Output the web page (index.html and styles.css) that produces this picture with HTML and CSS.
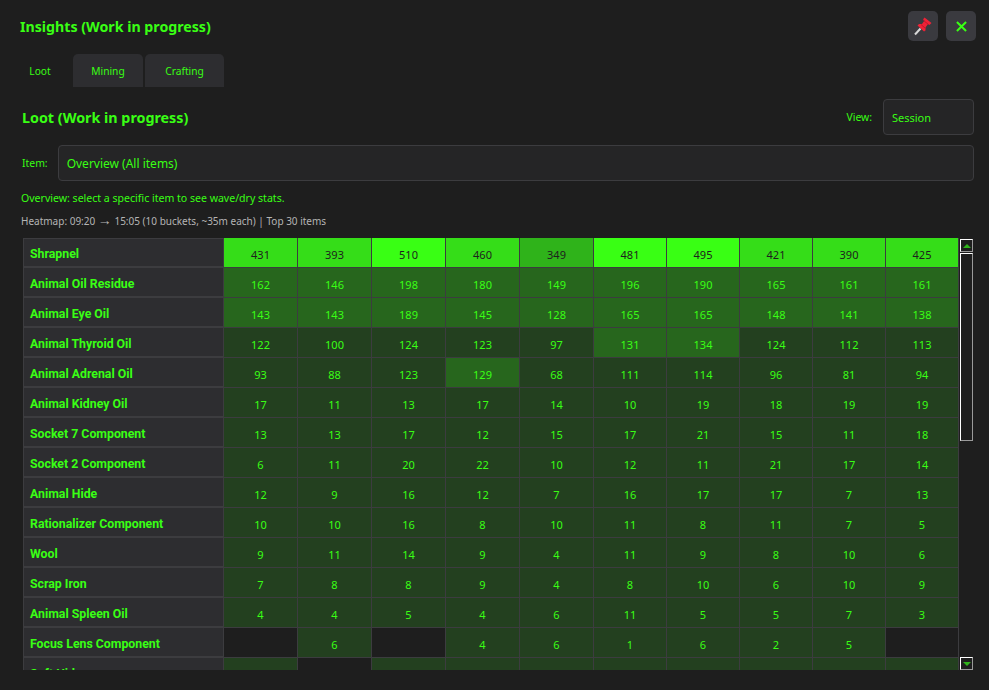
FILE: index.html
```html
<!DOCTYPE html>
<html lang="en">
<head>
    <meta charset="UTF-8">
    <title>Insights (Work in progress)</title>
    <link rel="stylesheet" href="styles.css">
</head>
<body>
    <div class="window">
        <header class="title-bar">
            <h1>Insights (Work in progress)</h1>
            <div class="title-buttons">
                <button class="icon-button" aria-label="Pin">
                    <svg width="20" height="20" viewBox="0 0 20 20">
                        <path d="M2 18.5 L7.5 12.5" stroke="#d8d8d8" stroke-width="2"/>
                        <path d="M11.5 1.5 L18.5 7 L16.5 9 L15 8 L12.5 11.5 L12.5 14.5 L11 15.5 L4.5 9.5 L6 8 L9 8 L11.5 4.5 L10 3.5 Z" fill="#ee2236"/>
                        <path d="M10.5 4.5 L15.5 8.5 M8 8.5 L12.5 12.5" stroke="#c2152c" stroke-width="1"/>
                    </svg>
                </button>
                <button class="icon-button" aria-label="Close">
                    <svg width="11" height="11" viewBox="0 0 12 12">
                        <path d="M1 1 L11 11 M11 1 L1 11" stroke="#39ff14" stroke-width="2.2"/>
                    </svg>
                </button>
            </div>
        </header>

        <nav class="tabs">
            <div class="tab active">Loot</div>
            <div class="tab tab-mining">Mining</div>
            <div class="tab tab-crafting">Crafting</div>
        </nav>

        <div class="section-head">
            <h2>Loot (Work in progress)</h2>
            <div class="view-picker">
                <span>View:</span>
                <div class="field view-field">Session</div>
            </div>
        </div>

        <div class="item-row">
            <span>Item:</span>
            <div class="field item-field">Overview (All items)</div>
        </div>

        <p class="hint">Overview: select a specific item to see wave/dry stats.</p>
        <p class="heatmap-info">Heatmap: 09:20 <span class="arrow">→</span> 15:05 (10 buckets, ~35m each) | Top 30 items</p>

        <div class="heatmap">
            <table>
                <tr><th>Shrapnel</th><td class="hot">431</td><td class="hot">393</td><td class="top">510</td><td class="hot">460</td><td class="warm">349</td><td class="top">481</td><td class="top">495</td><td class="hot">421</td><td class="hot">390</td><td class="hot">425</td></tr>
                <tr><th>Animal Oil Residue</th><td class="mid">162</td><td class="mid">146</td><td class="mid">198</td><td class="mid">180</td><td class="mid">149</td><td class="mid">196</td><td class="mid">190</td><td class="mid">165</td><td class="mid">161</td><td class="mid">161</td></tr>
                <tr><th>Animal Eye Oil</th><td class="mid">143</td><td class="mid">143</td><td class="mid">189</td><td class="mid">145</td><td class="mid">128</td><td class="mid">165</td><td class="mid">165</td><td class="mid">148</td><td class="mid">141</td><td class="mid">138</td></tr>
                <tr><th>Animal Thyroid Oil</th><td>122</td><td>100</td><td>124</td><td>123</td><td>97</td><td class="mid">131</td><td class="mid">134</td><td>124</td><td>112</td><td>113</td></tr>
                <tr><th>Animal Adrenal Oil</th><td>93</td><td>88</td><td>123</td><td class="mid">129</td><td>68</td><td>111</td><td>114</td><td>96</td><td>81</td><td>94</td></tr>
                <tr><th>Animal Kidney Oil</th><td>17</td><td>11</td><td>13</td><td>17</td><td>14</td><td>10</td><td>19</td><td>18</td><td>19</td><td>19</td></tr>
                <tr><th>Socket 7 Component</th><td>13</td><td>13</td><td>17</td><td>12</td><td>15</td><td>17</td><td>21</td><td>15</td><td>11</td><td>18</td></tr>
                <tr><th>Socket 2 Component</th><td>6</td><td>11</td><td>20</td><td>22</td><td>10</td><td>12</td><td>11</td><td>21</td><td>17</td><td>14</td></tr>
                <tr><th>Animal Hide</th><td>12</td><td>9</td><td>16</td><td>12</td><td>7</td><td>16</td><td>17</td><td>17</td><td>7</td><td>13</td></tr>
                <tr><th>Rationalizer Component</th><td>10</td><td>10</td><td>16</td><td>8</td><td>10</td><td>11</td><td>8</td><td>11</td><td>7</td><td>5</td></tr>
                <tr><th>Wool</th><td>9</td><td>11</td><td>14</td><td>9</td><td>4</td><td>11</td><td>9</td><td>8</td><td>10</td><td>6</td></tr>
                <tr><th>Scrap Iron</th><td>7</td><td>8</td><td>8</td><td>9</td><td>4</td><td>8</td><td>10</td><td>6</td><td>10</td><td>9</td></tr>
                <tr><th>Animal Spleen Oil</th><td>4</td><td>4</td><td>5</td><td>4</td><td>6</td><td>11</td><td>5</td><td>5</td><td>7</td><td>3</td></tr>
                <tr><th>Focus Lens Component</th><td class="empty"></td><td>6</td><td class="empty"></td><td>4</td><td>6</td><td>1</td><td>6</td><td>2</td><td>5</td><td class="empty"></td></tr>
                <tr><th>Soft Hide</th><td>2</td><td class="empty"></td><td>2</td><td>3</td><td>1</td><td>3</td><td>3</td><td>1</td><td>5</td><td>3</td></tr>
            </table>
            <div class="scrollbar">
                <div class="scroll-btn"><span class="arrow-up"></span></div>
                <div class="scroll-thumb"></div>
                <div class="scroll-track"></div>
                <div class="scroll-btn"><span class="arrow-down"></span></div>
            </div>
        </div>
    </div>
</body>
</html>
```

FILE: styles.css
```css
html, body {
    margin: 0;
    height: 100%;
    overflow: hidden;
}
body {
    font-family: "Noto Sans", "Open Sans", sans-serif;
    font-size: 11px;
    background-color: #1e1e1e;
    color: #39ff14;
}
.window {
    padding: 11px 15px 0 18px;
    height: 690px;
    box-sizing: border-box;
}
.title-bar {
    display: flex;
    justify-content: space-between;
    align-items: center;
    height: 30px;
    padding-left: 2px;
}
h1 {
    margin: 0;
    font-size: 14.2px;
    font-weight: bold;
}
.title-buttons {
    display: flex;
    gap: 8px;
    margin-right: -2px;
}
.icon-button {
    display: flex;
    justify-content: center;
    align-items: center;
    width: 30px;
    height: 30px;
    padding: 0;
    background-color: #3a3a3f;
    border: none;
    border-radius: 5px;
}
.tabs {
    display: flex;
    height: 33px;
    margin-top: 13px;
    font-size: 10.2px;
}
.tab {
    display: flex;
    justify-content: center;
    align-items: center;
    background-color: #2d2d30;
    border-radius: 5px 5px 0 0;
}
.tab.active {
    box-sizing: border-box;
    width: 55px;
    padding-right: 11px;
    background-color: transparent;
}
.tab-mining {
    width: 70px;
    margin-right: 2px;
}
.tab-crafting {
    width: 79px;
}
.section-head {
    display: flex;
    justify-content: space-between;
    align-items: center;
    height: 36px;
    margin-top: 12px;
    padding-left: 4px;
}
h2 {
    margin: 0;
    font-size: 14.3px;
    font-weight: bold;
}
.view-picker {
    display: flex;
    align-items: center;
    gap: 11px;
    font-size: 10.4px;
}
.field {
    display: flex;
    align-items: center;
    box-sizing: border-box;
    height: 36px;
    padding-left: 8px;
    background-color: #252526;
    border: 1px solid #3c3c3f;
    border-radius: 4px;
}
.view-field {
    width: 91px;
    font-size: 11px;
}
.item-row {
    display: flex;
    align-items: center;
    gap: 10px;
    margin-top: 10px;
    padding-left: 4px;
    font-size: 10.4px;
}
.item-field {
    flex: 1;
    font-size: 12px;
}
.hint, .heatmap-info {
    margin: 0;
    padding-left: 3px;
    line-height: 15px;
}
.hint {
    margin-top: 10px;
    font-size: 10.55px;
}
.heatmap-info {
    margin-top: 8px;
    font-size: 10px;
    color: #b4b4b4;
}
.arrow {
    font-family: "Liberation Sans", sans-serif;
    font-size: 14px;
    line-height: 0;
}
.heatmap {
    display: flex;
    height: 432px;
    margin-top: 9px;
    margin-left: 5px;
    overflow: hidden;
}
table {
    width: 936px;
    height: 450px;
    margin-top: -1px;
    table-layout: fixed;
    border-collapse: collapse;
    flex: none;
}
tr {
    height: 30px;
}
th {
    width: 200px;
    box-sizing: border-box;
    padding: 3px 0 0 6px;
    text-align: left;
    font-family: Roboto, sans-serif;
    font-size: 12.3px;
    font-weight: bold;
    background-color: #2d2d30;
    border: 1px solid #3c3c3f;
    box-shadow: inset 0 -1px 0 #3c3c3f;
}
tr:first-child th {
    box-shadow: inset 0 1px 0 #3c3c3f, inset 0 -1px 0 #3c3c3f;
}
td {
    width: 72px;
    padding: 3px 0 0;
    text-align: center;
    background-color: #23401f;
    border: 1px solid #3c3c3f;
}
td:nth-child(-n+6) {
    width: 73px;
}
td.mid {
    background-color: #27661d;
}
td.warm {
    background-color: #2fb31a;
    color: #1e1e1e;
}
td.hot {
    background-color: #35dd18;
    color: #1e1e1e;
}
td.top {
    background-color: #39ff14;
    color: #1e1e1e;
}
td.empty {
    background-color: #1e1e1e;
}
.scrollbar {
    display: flex;
    flex-direction: column;
    flex: none;
    width: 13px;
    margin-left: 1px;
    padding-top: 1px;
}
.scroll-btn, .scroll-thumb {
    box-sizing: border-box;
    width: 13px;
    background-color: #1e1e1e;
    border: 1px solid #ffffff;
    border-right-color: #9a9a9a;
    border-bottom-color: #9a9a9a;
}
.scroll-btn {
    display: flex;
    justify-content: center;
    align-items: center;
    height: 13px;
    flex: none;
}
.scroll-thumb {
    height: 188px;
    margin-top: 1px;
    flex: none;
}
.scroll-track {
    flex: 1;
}
.arrow-up, .arrow-down {
    width: 0;
    height: 0;
    border-left: 4px solid transparent;
    border-right: 4px solid transparent;
}
.arrow-up {
    border-bottom: 4px solid #2fb31a;
}
.arrow-down {
    border-top: 4px solid #2fb31a;
}
```
